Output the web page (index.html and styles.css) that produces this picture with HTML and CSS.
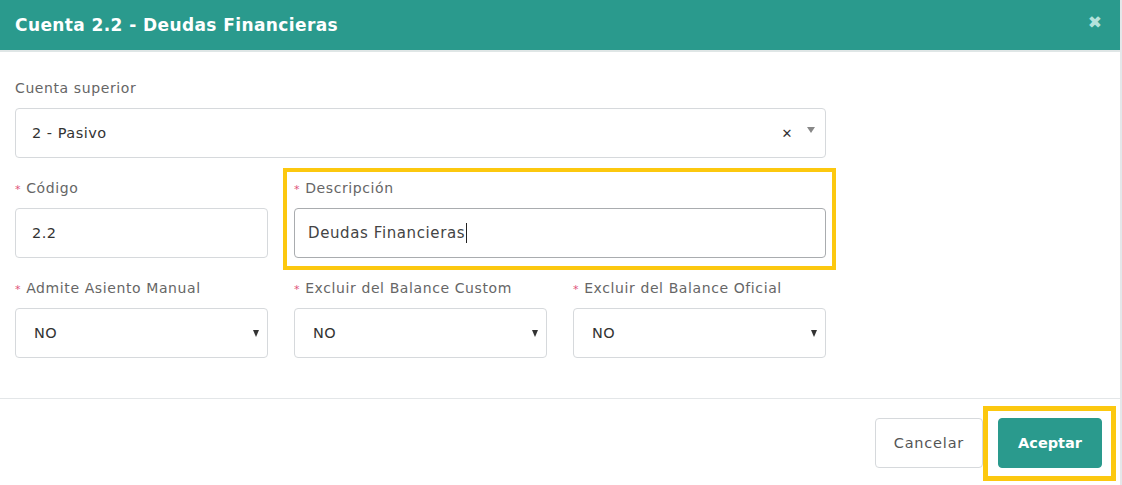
FILE: index.html
```html
<!DOCTYPE html>
<html>
<head>
    <meta charset="utf-8">
    <link rel="stylesheet" href="styles.css">
</head>
<body>
    <div class="modal">
        <div class="modal-header">
            <h4 class="modal-title">Cuenta 2.2 - Deudas Financieras</h4>
            <span class="modal-close">&#10006;</span>
        </div>

        <div class="modal-body">
            <div class="form-row">
                <div class="form-group span-3">
                    <label>Cuenta superior</label>
                    <div class="field select">
                        <span>2 - Pasivo</span>
                        <span class="clear">&#10005;</span>
                        <span class="caret caret-grey"></span>
                    </div>
                </div>
            </div>

            <div class="form-row">
                <div class="form-group">
                    <label><i>*</i> Código</label>
                    <div class="field">2.2</div>
                </div>
                <div class="form-group span-2 highlight">
                    <label><i>*</i> Descripción</label>
                    <div class="field focused">Deudas Financieras<span class="cursor"></span></div>
                </div>
            </div>

            <div class="form-row">
                <div class="form-group">
                    <label><i>*</i> Admite Asiento Manual</label>
                    <div class="field select"><span class="upper">NO</span><span class="caret"></span></div>
                </div>
                <div class="form-group">
                    <label><i>*</i> Excluir del Balance Custom</label>
                    <div class="field select"><span class="upper">NO</span><span class="caret"></span></div>
                </div>
                <div class="form-group">
                    <label><i>*</i> Excluir del Balance Oficial</label>
                    <div class="field select"><span class="upper">NO</span><span class="caret"></span></div>
                </div>
            </div>
        </div>

        <div class="modal-footer">
            <button class="btn btn-default">Cancelar</button>
            <button class="btn btn-primary highlight">Aceptar</button>
        </div>
    </div>
</body>
</html>
```

FILE: styles.css
```css
html, body {
    margin: 0;
    height: 100%;
    overflow: hidden;
}

body {
    background-color: #ffffff;
    font-family: "DejaVu Sans", "Open Sans", sans-serif;
    color: #555;
}

.modal {
    width: 1120px;
    height: 100%;
    border-right: 2px solid #e4e8ea;
}

.modal-header {
    height: 50px;
    background-color: #2a9a8d;
    border-bottom: 2px solid #dfe6e6;
    display: flex;
    align-items: center;
    padding: 0 18px 0 15px;
}

.modal-title {
    flex: 1;
    margin: 0;
    color: #fff;
    font-size: 17px;
    font-weight: 700;
    letter-spacing: 0.4px;
}

.modal-close {
    color: #b5e2dc;
    font-size: 17px;
    margin-top: -6px;
}

.modal-body {
    padding: 26px 15px 20px 15px;
    border-bottom: 1px solid #e3e6e8;
}

.form-row {
    display: grid;
    grid-template-columns: repeat(3, 253px);
    column-gap: 26px;
}

.form-group {
    position: relative;
    margin-bottom: 20px;
}

.span-3 { grid-column: span 3; }
.span-2 { grid-column: span 2; }

.form-group label {
    display: block;
    height: 20px;
    line-height: 20px;
    font-size: 14px;
    letter-spacing: 0.6px;
    color: #666;
    margin-bottom: 10px;
}

.form-group label i {
    font-style: normal;
    color: #e0527a;
    font-size: 11px;
}

.field {
    box-sizing: border-box;
    height: 50px;
    border: 1px solid #d6d9dc;
    border-radius: 4px;
    padding: 0 16px;
    display: flex;
    align-items: center;
    font-size: 14.5px;
    letter-spacing: 0.5px;
    color: #333;
}

.field.focused {
    border-color: #a9acaf;
    padding-left: 13px;
    color: #444;
    font-size: 15px;
    letter-spacing: 0.6px;
}

.cursor {
    display: inline-block;
    width: 1px;
    height: 20px;
    background: #222;
    margin-left: 1px;
}

.field.select .upper {
    flex: 1;
    padding-left: 2px;
}

.field.select > span:first-child {
    flex: 1;
}

.clear {
    font-size: 13px;
    font-weight: 700;
    color: #333;
    margin-right: 14px;
}

.caret {
    width: 0;
    height: 0;
    border-left: 3px solid transparent;
    border-right: 3px solid transparent;
    border-top: 7px solid #333;
    margin-right: -8px;
}

.caret-grey {
    border-left-width: 4px;
    border-right-width: 4px;
    border-top: 6px solid #888;
    margin-right: -6px;
    margin-top: -6px;
}

.highlight::after {
    content: "";
    position: absolute;
    border: 4px solid #fcc80f;
    pointer-events: none;
}

.form-group.highlight::after {
    left: -11px;
    top: -10px;
    right: -10px;
    bottom: -12px;
}

.modal-footer {
    display: flex;
    justify-content: flex-end;
    gap: 15px;
    padding: 19px 18px 0 0;
}

.btn {
    position: relative;
    height: 50px;
    font-family: inherit;
    font-size: 14.5px;
    border-radius: 4px;
    cursor: pointer;
}

.btn-default {
    background: #fff;
    color: #555;
    border: 1px solid #d6d9dc;
    letter-spacing: 0.8px;
    padding: 0 18px;
}

.btn-primary {
    background: #2a9a8d;
    color: #fff;
    border: 1px solid #2a9a8d;
    font-weight: 700;
    padding: 0 19px;
}

.btn.highlight::after {
    left: -16px;
    top: -13px;
    right: -15px;
    bottom: -14px;
    border-width: 5px;
}
```
